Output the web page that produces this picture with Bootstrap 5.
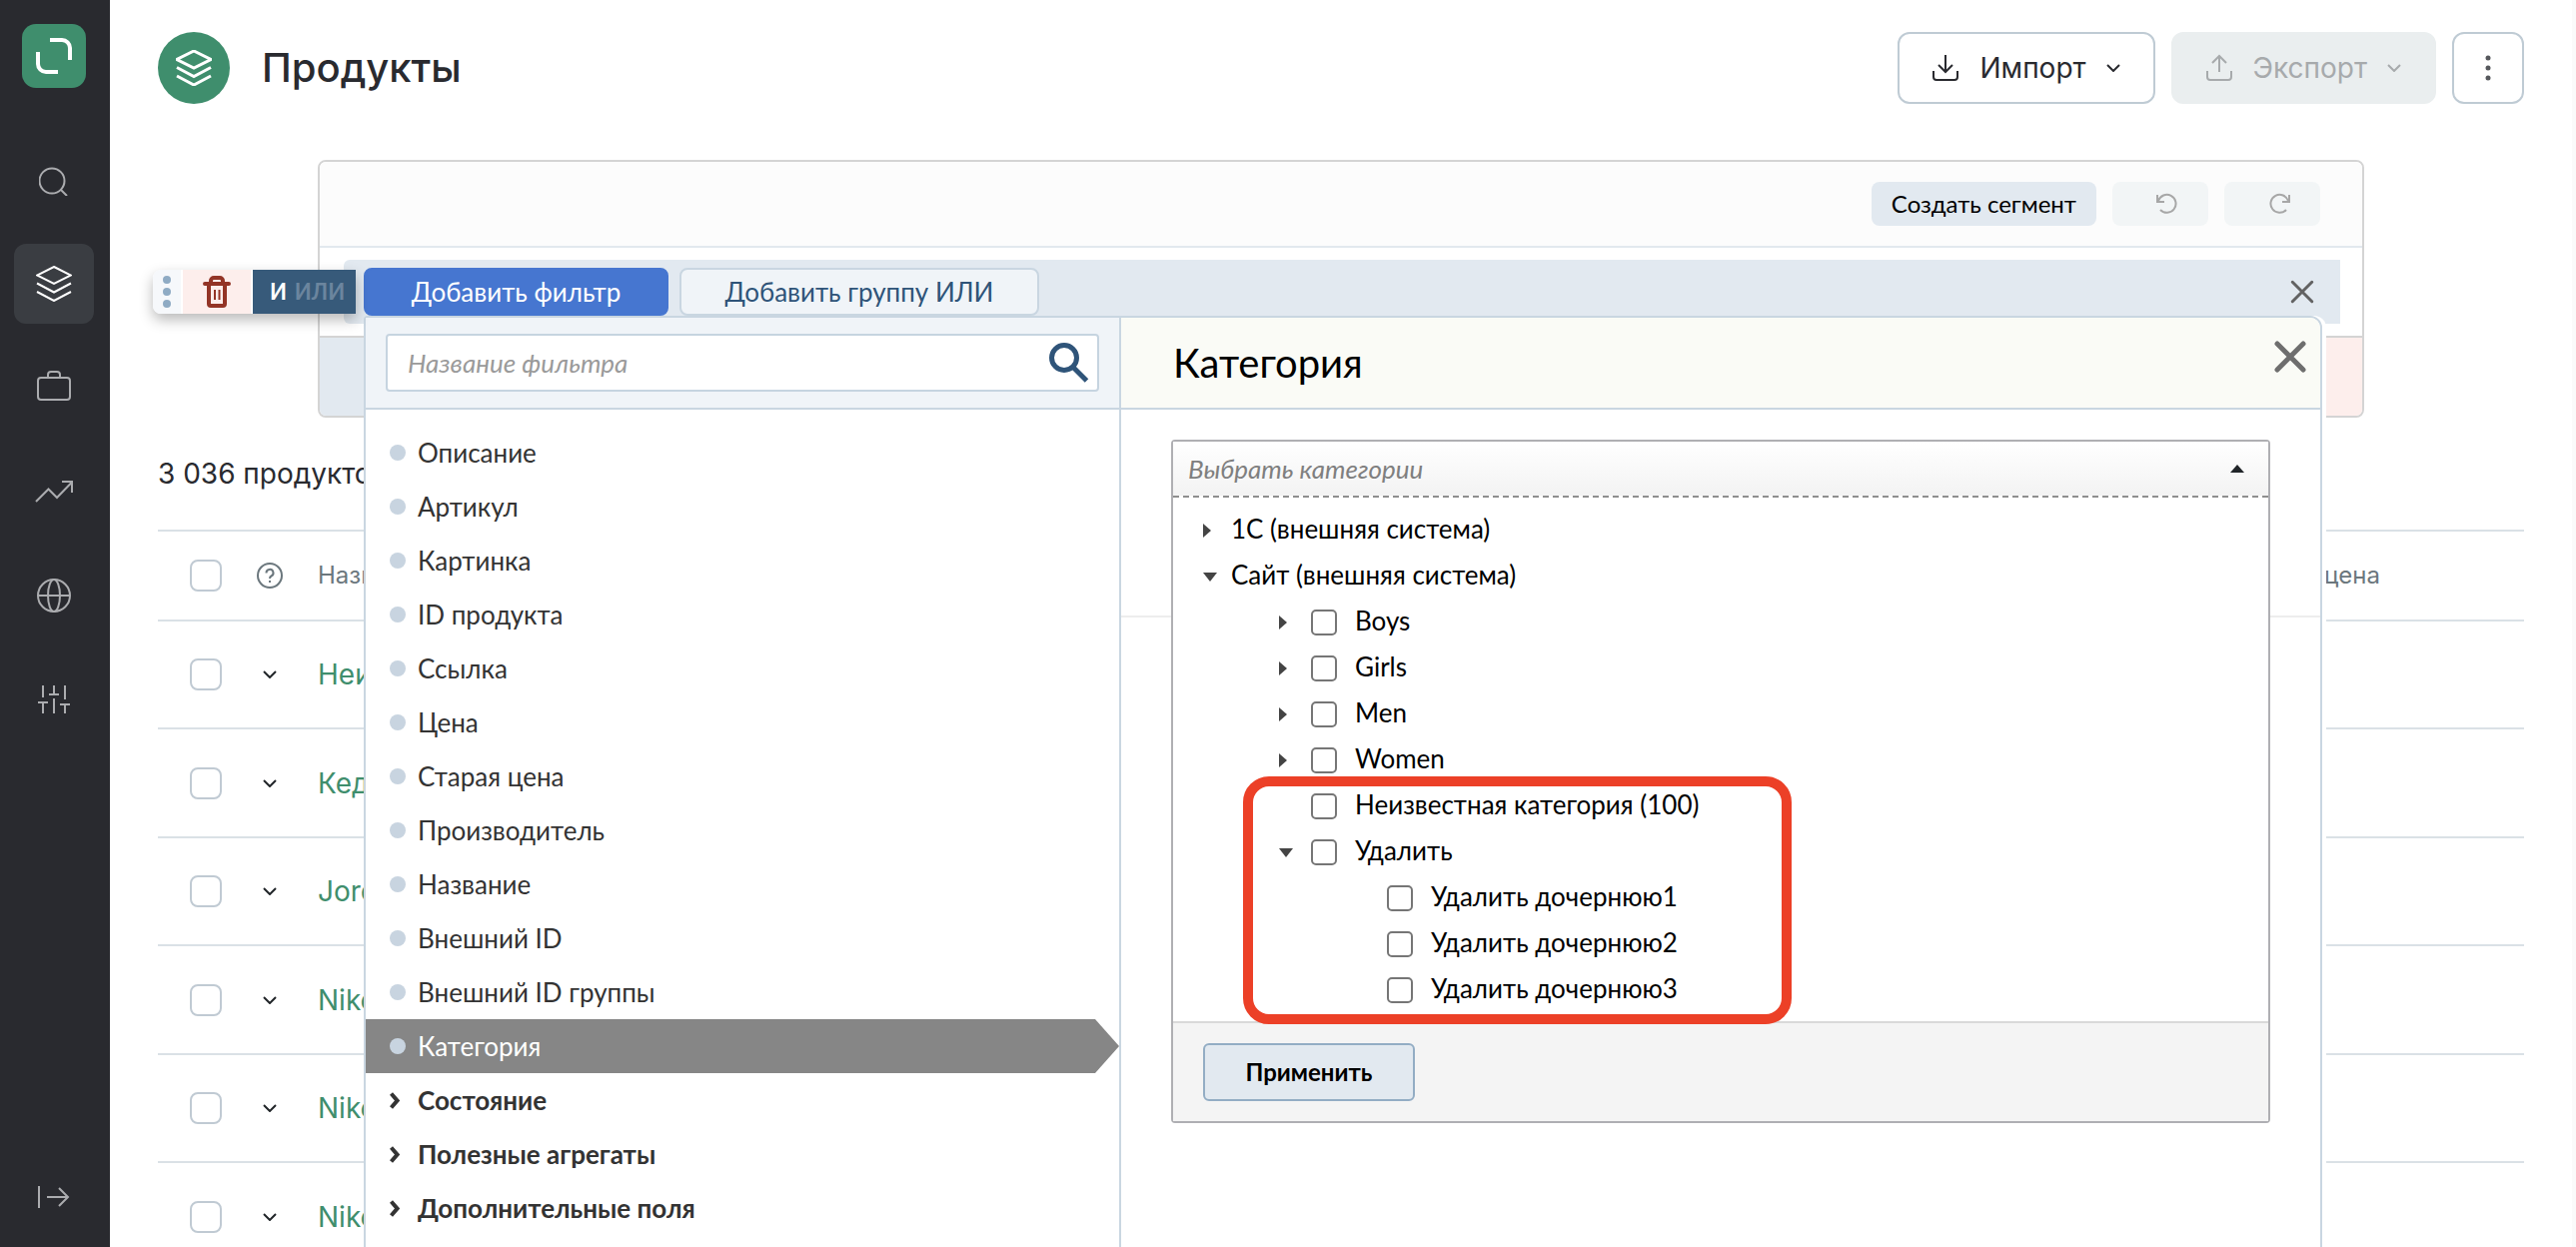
<!DOCTYPE html>
<html lang="ru">
<head>
<meta charset="utf-8">
<meta name="viewport" content="width=device-width, initial-scale=1">
<title>Продукты</title>
<link href="https://cdn.jsdelivr.net/npm/bootstrap@5.3.0/dist/css/bootstrap.min.css" rel="stylesheet">
<style>
  :root { --ink: #292a2f; --green: #3f8e6d; --line: #c9d6e1; --band: #e2e9f0; --navy: #375a7a; }
  body { font-family: Inter, sans-serif; font-size: 28px; line-height: 40px; color: var(--ink); background: #fff; }
  svg { display: block; fill: none; stroke: currentColor; flex: none; }
  button { font-family: inherit; }
  .plain { border: 0; background: none; padding: 0; color: inherit; }
  .solid { fill: currentColor; stroke: none; }

  /* sidebar */
  .side { width: 110px; background: #292a2f; padding: 24px 2px 10px 0; gap: 24px; color: #abacaf; }
  .logo { width: 64px; height: 64px; border-radius: 14px; background: var(--green); color: #fff; margin-bottom: 28px; }
  .tile { width: 80px; height: 80px; border-radius: 12px; color: inherit; }
  .tile.active { background: #3a3d42; color: #fff; }

  /* page head */
  .page { padding: 32px 48px 0; border-right: 4px solid #fafafa; }
  .crest { width: 72px; height: 72px; border-radius: 50%; background: var(--green); color: #fff; margin-right: 32px; }
  .page h1 { font-size: 40px; line-height: 48px; font-weight: 500; }
  .act { height: 72px; border: 2px solid #bfcbd4; border-radius: 12px; background: #fff; color: var(--ink); font-size: 28px; padding: 0 33px 0 32px; gap: 20px; }
  .act:disabled { background: #eaeeef; border-color: #eaeeef; color: #a7aaac; opacity: 1; }
  .act.dots { width: 72px; padding: 0; color: #55575b; }

  /* segment builder */
  .builder { margin: 56px 160px 36px; border: 2px solid #d4d4d4; border-radius: 8px; font-family: Lato, sans-serif; }
  .builder-head { height: 86px; padding-right: 42px; gap: 16px; background: #fcfcfc; border-bottom: 2px solid #e2e9ee; border-radius: 6px 6px 0 0; }
  .mini { height: 44px; border: 0; border-radius: 8px; background: var(--band); color: #000; font-size: 24px; line-height: 28px; padding: 0 20px; }
  .mini:disabled { background: #f2f5f6; color: #a7a7a7; opacity: 1; width: 96px; padding: 0 0 0 14px; }
  .builder-body { padding: 12px 22px 12px 24px; }
  .band { height: 64px; background: var(--band); border-radius: 6px 0 0 6px; padding: 8px 26px 8px 20px; gap: 11px; }
  .tab-btn { height: 48px; border: 2px solid var(--line); border-radius: 8px; background: #f0f4f8; color: #2f5479; font-size: 26px; line-height: 32px; width: 360px; padding: 0; }
  .tab-btn.on { background: #4676d0; border-color: #4676d0; color: #fff; width: 305px; }
  .band-close { color: #626262; }
  .builder-foot { height: 80px; border-top: 2px solid #d4d4d4; }
  .zone-and { background: var(--band); border-radius: 0 0 0 6px; }
  .zone-not { width: 128px; background: #fdeeec; border-radius: 0 0 6px 0; }

  .tools { left: -191px; top: 10px; height: 44px; gap: 2px; background: #fff; border-radius: 8px 0 0 8px; box-shadow: 0 6px 14px rgba(0,0,0,.28); z-index: 3; }
  .grip { width: 28px; background: #f6f8fb; color: #8fabc4; border-radius: 8px 0 0 8px; }
  .trash { width: 68px; background: #fdeeec; color: #933426; }
  .logic { width: 103px; background: var(--navy); color: #fff; font-size: 22px; font-weight: 700; gap: 8px; padding-left: 6px; }
  .logic .off { color: #6b859e; }

  /* filter menu */
  .menu { left: 20px; right: 18px; top: 56px; min-height: 100vh; background: #fff; border: 2px solid var(--line); border-radius: 4px 12px 0 0; box-shadow: 4px 0 0 #fff; z-index: 2; font-size: 26px; line-height: 32px; }
  .filters { width: 756px; border-right: 2px solid var(--line); }
  .menu-head { height: 92px; background: #f0f4f8; border-bottom: 2px solid var(--line); }
  .find { margin: 16px 20px; height: 58px; border: 2px solid #c6d4e0; border-radius: 4px; background: #fff; color: #2f5479; padding: 0 8px 0 20px; }
  .find input { border: 0; outline: 0; font-style: italic; font-size: 26px; color: #333; }
  .find input::placeholder { color: #9a9a9a; }
  .filter-list { padding: 16px 0; }
  .filter-list li { height: 54px; padding-left: 24px; gap: 12px; color: #333; }
  .bullet { width: 16px; height: 16px; border-radius: 50%; background: #c8d4e0; }
  .filter-list .current { background: #868686; color: #fff; clip-path: polygon(0 0, calc(100% - 24px) 0, 100% 50%, calc(100% - 24px) 100%, 0 100%); }
  .filter-list .group { font-weight: 700; }

  .detail-head { background: #fafbf6; padding: 0 14px 0 52px; color: #6e6e6e; border-top-right-radius: 10px; }
  .detail-head h2 { font-size: 40px; line-height: 48px; color: #000; font-weight: 400; }
  .detail-close { margin-bottom: 12px; }
  .detail-body { padding: 30px 50px; background: linear-gradient(#ededed, #ededed) 0 206px / 100% 2px no-repeat; }
  .picker { border: 2px solid #afafb3; border-radius: 4px; background: #fff; color: #000; }
  .picker-head { height: 56px; width: 100%; padding: 0 24px 0 15px; background: linear-gradient(#fff, #f3f3f3); border-bottom: 2px dashed #8f8f8f; font-style: italic; color: #7f7f7f; text-align: left; }
  .tree { padding: 10px 0 8px 30px; }
  .tree ul { padding-left: 76px; }
  .leaf { height: 46px; }
  .slot { width: 28px; color: #444; }
  ul ul .slot { width: 32px; }
  .slot svg { fill: currentColor; stroke: none; }
  .leaf label { padding: 0 0 4px 18px; }
  .leaf > span { padding-bottom: 4px; }
  .box { appearance: none; width: 26px; height: 26px; margin: 0; border: 2px solid #767676; border-radius: 5px; background: #fff; }
  .picker-foot { height: 100px; padding-left: 30px; background: #f4f4f4; border-top: 2px solid #d9d9d9; }
  .apply { width: 212px; height: 58px; border: 2px solid #93adc4; border-radius: 6px; background: var(--band); color: #000; font-weight: 700; font-size: 24px; }
  .outline { left: 70px; top: 335px; width: 549px; height: 248px; border: 10px solid #ec4027; border-radius: 26px; pointer-events: none; }

  /* product table */
  .products { margin-top: 36px; border-collapse: separate; border-spacing: 0; table-layout: fixed; }
  .products > * > tr > * { padding: 0; border: 0; border-top: 2px solid #dae1e6; vertical-align: middle; background: none; }
  .products th { height: 90px; font-size: 24px; font-weight: 400; color: #6b777d; }
  .products td { height: 108px; }
  .products tr:nth-child(even) td { height: 109px; }
  .products .box { display: block; width: 32px; height: 32px; border-color: #c0cad3; border-radius: 8px; margin-left: 32px; }
  .c-check { width: 80px; } .c-open { width: 64px; }
  .products .c-name { padding-left: 16px; }
  .products .c-old { width: 400px; padding-right: 144px; text-align: right; }
  .products td a { color: var(--green); text-decoration: none; }
</style>
</head>
<body>
<svg width="0" height="0" class="position-absolute" aria-hidden="true">
  <symbol id="layers" viewBox="0 0 36 36"><path d="M18 1 35 9.500 18 18 1 9.500zM1 17.500 18 26.500 35 17.500M1 26 18 35 35 26"/></symbol>
  <symbol id="down" viewBox="0 0 14 8"><path d="m1 1 6 6 6-6"/></symbol>
  <symbol id="right" viewBox="0 0 9 16"><path d="M0 1 8 8 0 15z"/></symbol>
  <symbol id="open" viewBox="0 0 14 9"><path d="M0 0h14L7 9z"/></symbol>
  <symbol id="more" viewBox="0 0 10 17"><path d="m1.500 1.500 6 7-6 7"/></symbol>
  <symbol id="cross" viewBox="0 0 32 32"><path d="m3 3 26 26M29 3 3 29"/></symbol>
</svg>

<div class="d-flex vh-100 overflow-hidden">
  <nav class="side d-flex flex-column align-items-center flex-shrink-0" aria-label="Меню">
    <a href="#" class="logo d-flex align-items-center justify-content-center" aria-label="Главная">
      <svg width="36" height="36" viewBox="0 0 36 36" stroke-width="4"><path d="M14 2h12a8 8 0 0 1 8 8v12M2 14v12a8 8 0 0 0 8 8h12"/></svg></a>
    <a href="#" class="tile d-flex align-items-center justify-content-center" aria-label="Поиск">
      <svg width="30" height="32" viewBox="0 0 30 32" stroke-width="2"><circle cx="13" cy="17" r="12.500"/><path d="m22 26 6 6"/></svg></a>
    <a href="#" class="tile active d-flex align-items-center justify-content-center" aria-label="Продукты">
      <svg width="36" height="36" stroke-width="2"><use href="#layers"/></svg></a>
    <a href="#" class="tile d-flex align-items-center justify-content-center" aria-label="Заказы">
      <svg width="34" height="34" viewBox="0 0 34 34" stroke-width="2"><rect x="1" y="7" width="32" height="22" rx="3"/><path d="M11 7V4a3 3 0 0 1 3-3h6a3 3 0 0 1 3 3v3"/></svg></a>
    <a href="#" class="tile d-flex align-items-center justify-content-center" aria-label="Аналитика">
      <svg width="38" height="22" viewBox="0 0 38 22" stroke-width="2"><path d="M1 21 13.500 8.500 22 17 37 1.500M27 1h10v11"/></svg></a>
    <a href="#" class="tile d-flex align-items-center justify-content-center" aria-label="Сайты">
      <svg width="34" height="34" viewBox="0 0 34 34" stroke-width="2"><circle cx="17" cy="17" r="16"/><path d="M1 17h32"/><ellipse cx="17" cy="17" rx="6" ry="16"/></svg></a>
    <a href="#" class="tile d-flex align-items-center justify-content-center" aria-label="Настройки">
      <svg width="32" height="28" viewBox="0 0 32 28" stroke-width="2"><path d="M5 0v12M0 17h10M5 17v11M16 0v9M11 9h10M16 13v15M27 0v14M22 19h10M27 19v9"/></svg></a>
    <button class="tile plain mt-auto d-flex align-items-center justify-content-center" aria-label="Развернуть меню">
      <svg width="32" height="24" viewBox="0 0 32 24" stroke-width="2"><path d="M1 1v22M9 12h21M21 3l9 9-9 9"/></svg></button>
  </nav>

  <main class="page flex-grow-1">
    <header class="d-flex align-items-center">
      <div class="crest d-flex align-items-center justify-content-center"><svg width="36" height="36" stroke-width="3"><use href="#layers"/></svg></div>
      <h1 class="m-0 me-auto">Продукты</h1>
      <div class="d-flex gap-3">
        <button class="act d-flex align-items-center">
          <svg width="28" height="28" viewBox="0 0 28 28" stroke-width="2"><path d="M14 1v17M7 11l7 7 7-7M2 17v6a3 3 0 0 0 3 3h18a3 3 0 0 0 3-3v-6"/></svg>
          Импорт <svg width="14" height="8" stroke-width="2"><use href="#down"/></svg></button>
        <button class="act d-flex align-items-center" disabled>
          <svg width="28" height="28" viewBox="0 0 28 28" stroke-width="2"><path d="M14 18V2M7 9l7-7 7 7M2 17v6a3 3 0 0 0 3 3h18a3 3 0 0 0 3-3v-6"/></svg>
          Экспорт <svg width="14" height="8" stroke-width="2"><use href="#down"/></svg></button>
        <button class="act dots d-flex align-items-center justify-content-center" aria-label="Ещё">
          <svg class="solid" width="6" height="26" viewBox="0 0 6 26"><circle cx="3" cy="3" r="2.500"/><circle cx="3" cy="13" r="2.500"/><circle cx="3" cy="23" r="2.500"/></svg></button>
      </div>
    </header>

    <section class="builder">
      <div class="builder-head d-flex align-items-center justify-content-end">
        <button class="mini">Создать сегмент</button>
        <button class="mini d-flex align-items-center justify-content-center" disabled aria-label="Отменить">
          <svg width="22" height="22" viewBox="0 0 22 22" stroke-width="2"><path d="M1 2v7h7M2 8a9 9 0 1 1 2 9"/></svg></button>
        <button class="mini d-flex align-items-center justify-content-center" disabled aria-label="Повторить">
          <svg width="22" height="22" viewBox="0 0 22 22" stroke-width="2"><path d="M21 2v7h-7M20 8a9 9 0 1 0-2 9"/></svg></button>
      </div>
      <div class="builder-body">
        <div class="band position-relative d-flex align-items-center">
          <div class="tools position-absolute d-flex">
            <span class="grip d-flex align-items-center justify-content-center"><svg class="solid" width="8" height="32" viewBox="0 0 8 32"><circle cx="4" cy="4" r="4"/><circle cx="4" cy="16" r="4"/><circle cx="4" cy="28" r="4"/></svg></span>
            <button class="trash plain d-flex align-items-center justify-content-center" aria-label="Удалить">
              <svg width="28" height="32" viewBox="0 0 28 32"><path d="M2 8h24M6 8v20a2 2 0 0 0 2 2h12a2 2 0 0 0 2-2V8" stroke-width="4" stroke-linecap="round"/><path d="M8 7V5a3 3 0 0 1 3-3h6a3 3 0 0 1 3 3v2" stroke-width="4"/><path d="M12 14v10M16.500 14v10" stroke-width="2"/></svg></button>
            <button class="logic plain d-flex align-items-center justify-content-center"><span>И</span><span class="off">ИЛИ</span></button>
          </div>
          <button class="tab-btn on">Добавить фильтр</button>
          <button class="tab-btn">Добавить группу ИЛИ</button>
          <button class="plain band-close ms-auto" aria-label="Закрыть"><svg width="24" height="24" stroke-width="4" stroke-linecap="round"><use href="#cross"/></svg></button>

          <div class="menu position-absolute d-flex">
            <div class="filters flex-shrink-0">
              <div class="menu-head overflow-hidden">
                <div class="find d-flex align-items-center">
                  <input type="text" class="flex-grow-1 p-0" placeholder="Название фильтра" aria-label="Название фильтра">
                  <svg width="40" height="40" viewBox="0 0 40 40" stroke-width="5"><circle cx="15" cy="15" r="12.500"/><path d="m24.500 25 13 13"/></svg>
                </div>
              </div>
              <ul class="filter-list list-unstyled m-0">
                <li class="d-flex align-items-center"><span class="bullet"></span>Описание</li>
                <li class="d-flex align-items-center"><span class="bullet"></span>Артикул</li>
                <li class="d-flex align-items-center"><span class="bullet"></span>Картинка</li>
                <li class="d-flex align-items-center"><span class="bullet"></span>ID продукта</li>
                <li class="d-flex align-items-center"><span class="bullet"></span>Ссылка</li>
                <li class="d-flex align-items-center"><span class="bullet"></span>Цена</li>
                <li class="d-flex align-items-center"><span class="bullet"></span>Старая цена</li>
                <li class="d-flex align-items-center"><span class="bullet"></span>Производитель</li>
                <li class="d-flex align-items-center"><span class="bullet"></span>Название</li>
                <li class="d-flex align-items-center"><span class="bullet"></span>Внешний ID</li>
                <li class="d-flex align-items-center"><span class="bullet"></span>Внешний ID группы</li>
                <li class="current d-flex align-items-center"><span class="bullet"></span>Категория</li>
                <li class="group d-flex align-items-center"><svg width="16" height="17" viewBox="0 0 16 17" stroke-width="4"><use href="#more" width="10" height="17"/></svg>Состояние</li>
                <li class="group d-flex align-items-center"><svg width="16" height="17" viewBox="0 0 16 17" stroke-width="4"><use href="#more" width="10" height="17"/></svg>Полезные агрегаты</li>
                <li class="group d-flex align-items-center"><svg width="16" height="17" viewBox="0 0 16 17" stroke-width="4"><use href="#more" width="10" height="17"/></svg>Дополнительные поля</li>
              </ul>
            </div>

            <div class="flex-grow-1">
              <div class="menu-head detail-head d-flex align-items-center justify-content-between">
                <h2 class="m-0">Категория</h2>
                <button class="plain detail-close" aria-label="Закрыть"><svg width="32" height="32" stroke-width="5" stroke-linecap="round"><use href="#cross"/></svg></button>
              </div>
              <div class="detail-body">
                <div class="picker position-relative">
                  <button class="picker-head d-flex align-items-center justify-content-between border-top-0 border-start-0 border-end-0">Выбрать категории
                    <svg class="solid text-dark" width="14" height="8" viewBox="0 0 14 8"><path d="M7 0 14 8H0z"/></svg></button>
                  <ul class="tree list-unstyled m-0">
                    <li><div class="leaf d-flex align-items-center"><button class="plain slot" aria-label="Раскрыть"><svg width="9" height="16"><use href="#right"/></svg></button><span>1С (внешняя система)</span></div></li>
                    <li><div class="leaf d-flex align-items-center"><button class="plain slot" aria-label="Свернуть"><svg width="14" height="9"><use href="#open"/></svg></button><span>Сайт (внешняя система)</span></div>
                      <ul class="list-unstyled">
                        <li><div class="leaf d-flex align-items-center"><button class="plain slot" aria-label="Раскрыть"><svg width="9" height="16"><use href="#right"/></svg></button><input class="box" type="checkbox" id="c1"><label for="c1">Boys</label></div></li>
                        <li><div class="leaf d-flex align-items-center"><button class="plain slot" aria-label="Раскрыть"><svg width="9" height="16"><use href="#right"/></svg></button><input class="box" type="checkbox" id="c2"><label for="c2">Girls</label></div></li>
                        <li><div class="leaf d-flex align-items-center"><button class="plain slot" aria-label="Раскрыть"><svg width="9" height="16"><use href="#right"/></svg></button><input class="box" type="checkbox" id="c3"><label for="c3">Men</label></div></li>
                        <li><div class="leaf d-flex align-items-center"><button class="plain slot" aria-label="Раскрыть"><svg width="9" height="16"><use href="#right"/></svg></button><input class="box" type="checkbox" id="c4"><label for="c4">Women</label></div></li>
                        <li><div class="leaf d-flex align-items-center"><span class="slot"></span><input class="box" type="checkbox" id="c5"><label for="c5">Неизвестная категория (100)</label></div></li>
                        <li><div class="leaf d-flex align-items-center"><button class="plain slot" aria-label="Свернуть"><svg width="14" height="9"><use href="#open"/></svg></button><input class="box" type="checkbox" id="c6"><label for="c6">Удалить</label></div>
                          <ul class="list-unstyled">
                            <li><div class="leaf d-flex align-items-center"><span class="slot"></span><input class="box" type="checkbox" id="c7"><label for="c7">Удалить дочернюю1</label></div></li>
                            <li><div class="leaf d-flex align-items-center"><span class="slot"></span><input class="box" type="checkbox" id="c8"><label for="c8">Удалить дочернюю2</label></div></li>
                            <li><div class="leaf d-flex align-items-center"><span class="slot"></span><input class="box" type="checkbox" id="c9"><label for="c9">Удалить дочернюю3</label></div></li>
                          </ul></li>
                      </ul></li>
                  </ul>
                  <div class="picker-foot d-flex align-items-center"><button class="apply">Применить</button></div>
                  <div class="outline position-absolute"></div>
                </div>
              </div>
            </div>
          </div>
        </div>
      </div>
      <div class="builder-foot d-flex"><div class="zone-and flex-grow-1"></div><div class="zone-not"></div></div>
    </section>

    <div>3 036 продуктов</div>
    <table class="table products mb-0">
      <thead><tr>
        <th class="c-check"><input class="box" type="checkbox" aria-label="Выбрать все"></th>
        <th class="c-open"><svg class="mx-auto" width="26" height="26" viewBox="0 0 26 26" stroke-width="2"><circle cx="13" cy="13" r="12"/><path d="M9.500 10.500a3.500 3.500 0 1 1 5 3c-1 .500-1.500 1-1.500 2.500"/><path d="M13 18v2"/></svg></th>
        <th class="c-name">Название</th><th class="c-old">Старая цена</th>
      </tr></thead>
      <tbody>
        <tr><td><input class="box" type="checkbox" aria-label="Выбрать"></td><td><svg class="mx-auto" width="14" height="8" stroke-width="2"><use href="#down"/></svg></td><td class="c-name"><a href="#">Неизвестный</a></td><td class="c-old"></td></tr>
        <tr><td><input class="box" type="checkbox" aria-label="Выбрать"></td><td><svg class="mx-auto" width="14" height="8" stroke-width="2"><use href="#down"/></svg></td><td class="c-name"><a href="#">Кеды</a></td><td class="c-old"></td></tr>
        <tr><td><input class="box" type="checkbox" aria-label="Выбрать"></td><td><svg class="mx-auto" width="14" height="8" stroke-width="2"><use href="#down"/></svg></td><td class="c-name"><a href="#">Jordan</a></td><td class="c-old"></td></tr>
        <tr><td><input class="box" type="checkbox" aria-label="Выбрать"></td><td><svg class="mx-auto" width="14" height="8" stroke-width="2"><use href="#down"/></svg></td><td class="c-name"><a href="#">Nike</a></td><td class="c-old"></td></tr>
        <tr><td><input class="box" type="checkbox" aria-label="Выбрать"></td><td><svg class="mx-auto" width="14" height="8" stroke-width="2"><use href="#down"/></svg></td><td class="c-name"><a href="#">Nike</a></td><td class="c-old"></td></tr>
        <tr><td><input class="box" type="checkbox" aria-label="Выбрать"></td><td><svg class="mx-auto" width="14" height="8" stroke-width="2"><use href="#down"/></svg></td><td class="c-name"><a href="#">Nike</a></td><td class="c-old"></td></tr>
      </tbody>
    </table>
  </main>
</div>
<script src="https://cdn.jsdelivr.net/npm/bootstrap@5.3.0/dist/js/bootstrap.bundle.min.js"></script>
</body>
</html>
